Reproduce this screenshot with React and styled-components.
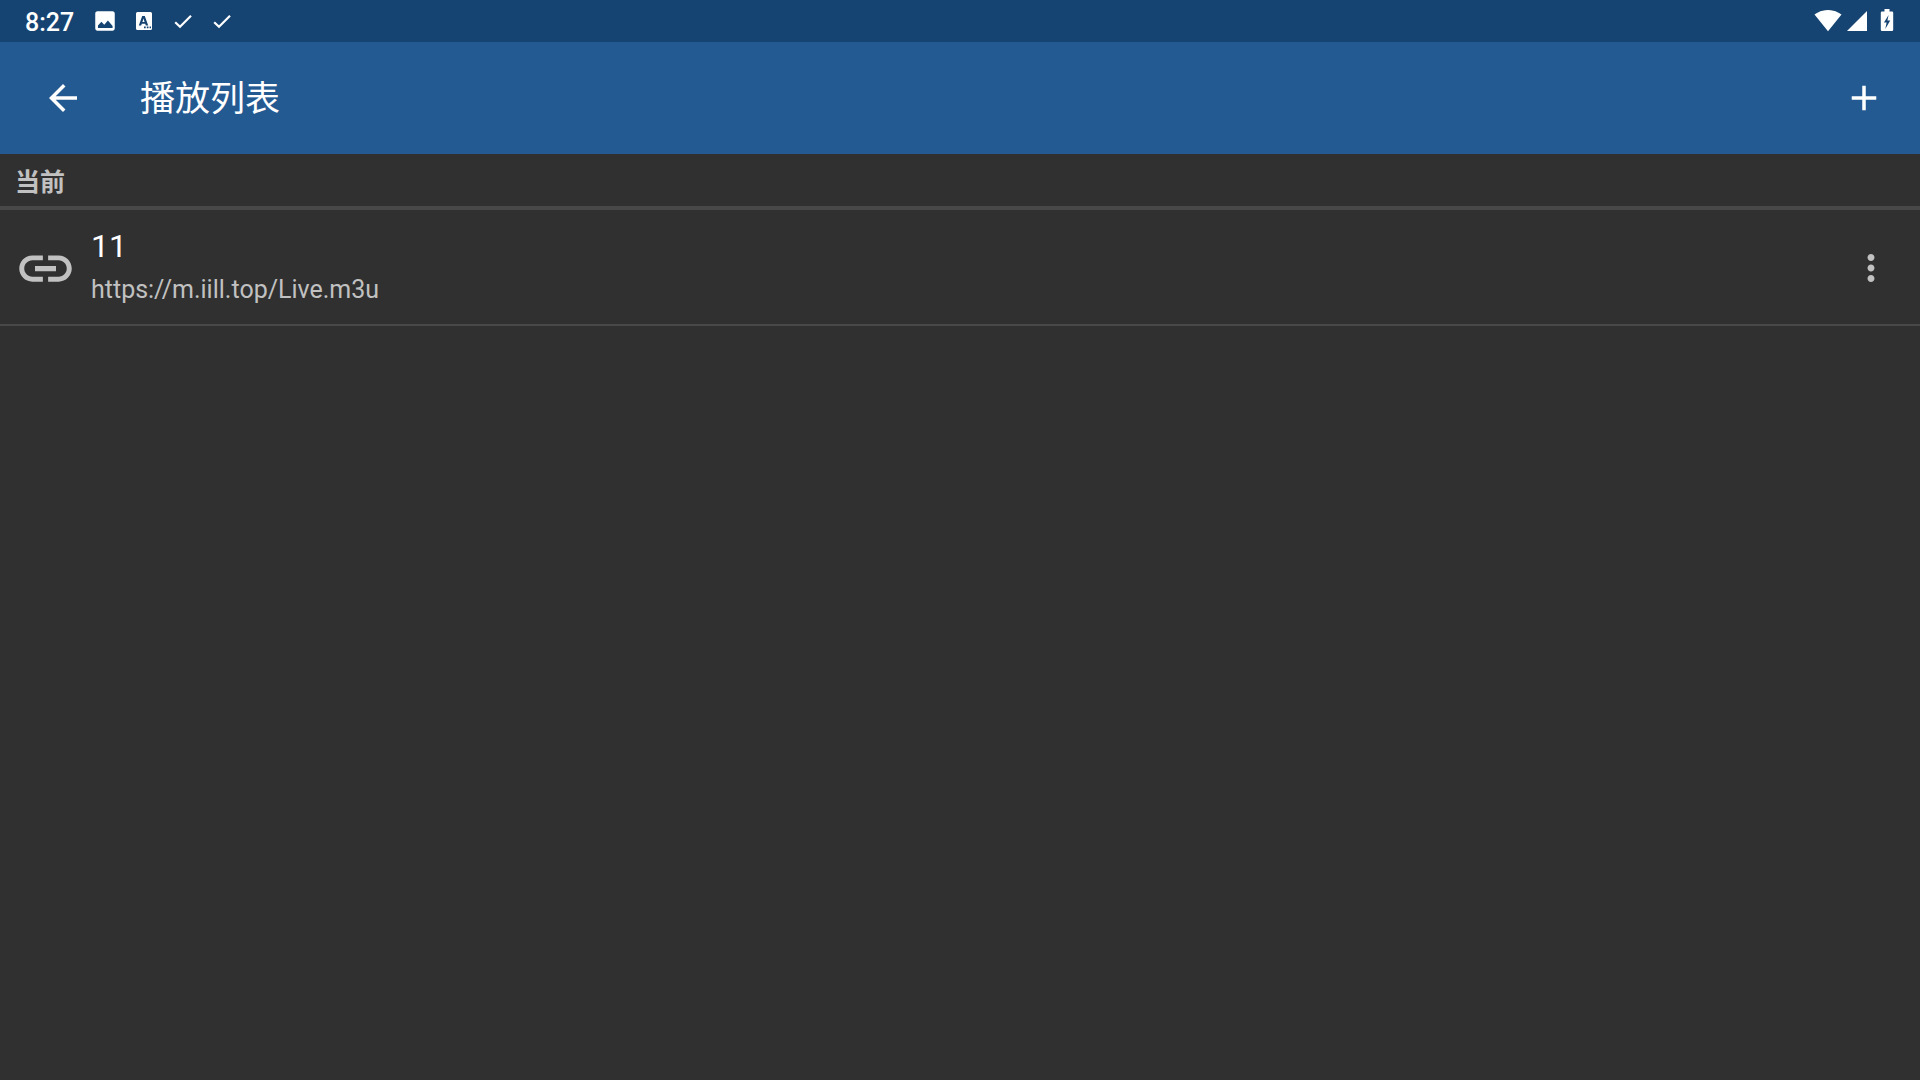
import React from "react";
import styled, { createGlobalStyle } from "styled-components";

const GlobalStyle = createGlobalStyle`
  *, *::before, *::after {
    box-sizing: border-box;
  }

  body {
    margin: 0;
    background: #303030;
    color: #ffffff;
    font-family: Roboto, "Noto Sans CJK SC", sans-serif;
  }
`;

const StatusBar = styled.div`
  display: flex;
  align-items: center;
  justify-content: space-between;
  height: 42px;
  padding: 0 18px 0 25px;
  background: #164472;
`;

const StatusGroup = styled.div`
  display: flex;
  align-items: center;
  gap: ${({ $gap }) => $gap}px;
`;

const Clock = styled.time`
  margin-right: 5px;
  padding-top: 3px;
  font-size: 25px;
  font-weight: 500;
  line-height: 42px;
`;

const Icon = styled.svg`
  display: block;
  flex: none;
  width: ${({ $width, $size }) => $width || $size}px;
  height: ${({ $size }) => $size}px;
  fill: currentColor;
`;

const Toolbar = styled.header`
  display: flex;
  align-items: center;
  height: 112px;
  padding: 0 21px 0 28px;
  background: #245a92;
`;

const IconButton = styled.button`
  display: flex;
  padding: 14px;
  border: 0;
  background: none;
  color: inherit;
  cursor: pointer;
`;

const Title = styled.h1`
  flex: 1;
  margin: 0 0 0 42px;
  padding-top: 3px;
  font-size: 35px;
  font-weight: 400;
  line-height: 42px;
`;

const SectionTitle = styled.h2`
  margin: 0;
  padding: 11px 15px 5px;
  border-bottom: 4px solid #484848;
  color: #c1c1c1;
  font-size: 25px;
  font-weight: 700;
  line-height: 36px;
`;

const Playlists = styled.ul`
  margin: 0;
  padding: 0;
  list-style: none;
`;

const PlaylistRow = styled.li`
  display: flex;
  align-items: center;
  gap: 14px;
  height: 116px;
  padding: 2px 14px 0;
  border-bottom: 2px solid #484848;
  color: #c1c1c1;
`;

const PlaylistText = styled.div`
  flex: 1;
  min-width: 0;
`;

const PlaylistName = styled.div`
  color: #ffffff;
  font-size: 32px;
  line-height: 44px;
`;

const PlaylistUrl = styled.div`
  font-size: 25px;
  line-height: 44px;
`;

const playlists = [{ id: 1, name: "11", url: "https://m.iill.top/Live.m3u" }];

const ImageIcon = () => (
  <Icon $size={26} viewBox="0 0 24 24" aria-hidden="true">
    <path d="M21 19V5c0-1.100-.9-2-2-2H5c-1.100 0-2 .9-2 2v14c0 1.100.9 2 2 2h14c1.100 0 2-.9 2-2zM5.500 18.500v-2.300L8.700 12.800l2.600 2.700 3.400-4 4.300 5v2z" />
  </Icon>
);

const KeyboardIcon = () => (
  <Icon $size={26} viewBox="0 0 26 26" aria-hidden="true">
    <path
      fillRule="evenodd"
      d="M6.500 4h13q1.500 0 1.500 1.500v15q0 1.500-1.500 1.500h-13q-1.500 0-1.500-1.500v-15q0-1.500 1.500-1.500zM11.200 8 7.800 17.500h2.400l.6-1.800h3.400l.6 1.800h2.400L13.800 8zM12.500 10.500l1.100 3.400h-2.200zM13 18.600v1.600h1.700v-1.600zM15.800 18.600v1.600h1.700v-1.600zM18.600 18.600v1.600h1.400v-1.600z"
    />
  </Icon>
);

const CheckIcon = () => (
  <Icon $size={26} viewBox="0 0 26 26" aria-hidden="true">
    <path
      d="M5.200 14.200 10 18.700 21 7.800"
      fill="none"
      stroke="currentColor"
      strokeWidth="2.200"
    />
  </Icon>
);

const WifiIcon = () => (
  <Icon $width={28} $size={22} viewBox="0 0 28 22" aria-hidden="true">
    <path d="M14 21.300 27.500 4.600C27 4.200 21.800 0 14 0S1 4.200.5 4.600z" />
  </Icon>
);

const SignalIcon = () => (
  <Icon $width={20} $size={20} viewBox="0 0 20 20" aria-hidden="true">
    <path d="M0 20h20V0z" />
  </Icon>
);

const BatteryIcon = () => (
  <Icon $width={30} $size={24} viewBox="0 0 30 24" aria-hidden="true">
    <path
      fillRule="evenodd"
      d="M12.500 0h5v2.500H20q1.200 0 1.200 1.200v17.100q0 1.200-1.200 1.200H10q-1.200 0-1.200-1.200V3.700q0-1.200 1.200-1.200h2.500zM16.600 6 12 13.500h2.600L13.300 20 18.200 11.500h-2.800z"
    />
  </Icon>
);

const BackIcon = () => (
  <Icon $size={42} viewBox="0 0 24 24" aria-hidden="true">
    <path d="M20 11H7.830l5.590-5.590L12 4l-8 8 8 8 1.410-1.410L7.830 13H20v-2z" />
  </Icon>
);

const AddIcon = () => (
  <Icon $size={42} viewBox="0 0 24 24" aria-hidden="true">
    <path d="M19 13h-6v6h-2v-6H5v-2h6V5h2v6h6v2z" />
  </Icon>
);

const LinkIcon = () => (
  <Icon $size={63} viewBox="0 0 24 24" aria-hidden="true">
    <path d="M3.900 12c0-1.710 1.390-3.100 3.100-3.100h4V7H7c-2.760 0-5 2.240-5 5s2.240 5 5 5h4v-1.900H7c-1.710 0-3.100-1.390-3.100-3.100zM8 13h8v-2H8v2zm9-6h-4v1.900h4c1.710 0 3.100 1.390 3.100 3.100s-1.390 3.100-3.100 3.100h-4V17h4c2.760 0 5-2.240 5-5s-2.240-5-5-5z" />
  </Icon>
);

const MoreIcon = () => (
  <Icon $size={42} viewBox="0 0 24 24" aria-hidden="true">
    <path d="M12 8c1.100 0 2-.9 2-2s-.9-2-2-2-2 .9-2 2 .9 2 2 2zm0 2c-1.100 0-2 .9-2 2s.9 2 2 2 2-.9 2-2-.9-2-2-2zm0 6c-1.100 0-2 .9-2 2s.9 2 2 2 2-.9 2-2-.9-2-2-2z" />
  </Icon>
);

const App = () => {
  return (
    <>
      <GlobalStyle />
      <StatusBar>
        <StatusGroup $gap={13}>
          <Clock>8:27</Clock>
          <ImageIcon />
          <KeyboardIcon />
          <CheckIcon />
          <CheckIcon />
        </StatusGroup>
        <StatusGroup $gap={5}>
          <WifiIcon />
          <SignalIcon />
          <BatteryIcon />
        </StatusGroup>
      </StatusBar>

      <Toolbar>
        <IconButton aria-label="返回">
          <BackIcon />
        </IconButton>
        <Title>播放列表</Title>
        <IconButton aria-label="添加">
          <AddIcon />
        </IconButton>
      </Toolbar>

      <main>
        <SectionTitle>当前</SectionTitle>
        <Playlists>
          {playlists.map((playlist) => (
            <PlaylistRow key={playlist.id}>
              <LinkIcon />
              <PlaylistText>
                <PlaylistName>{playlist.name}</PlaylistName>
                <PlaylistUrl>{playlist.url}</PlaylistUrl>
              </PlaylistText>
              <IconButton aria-label="更多">
                <MoreIcon />
              </IconButton>
            </PlaylistRow>
          ))}
        </Playlists>
      </main>
    </>
  );
};

export default App;
